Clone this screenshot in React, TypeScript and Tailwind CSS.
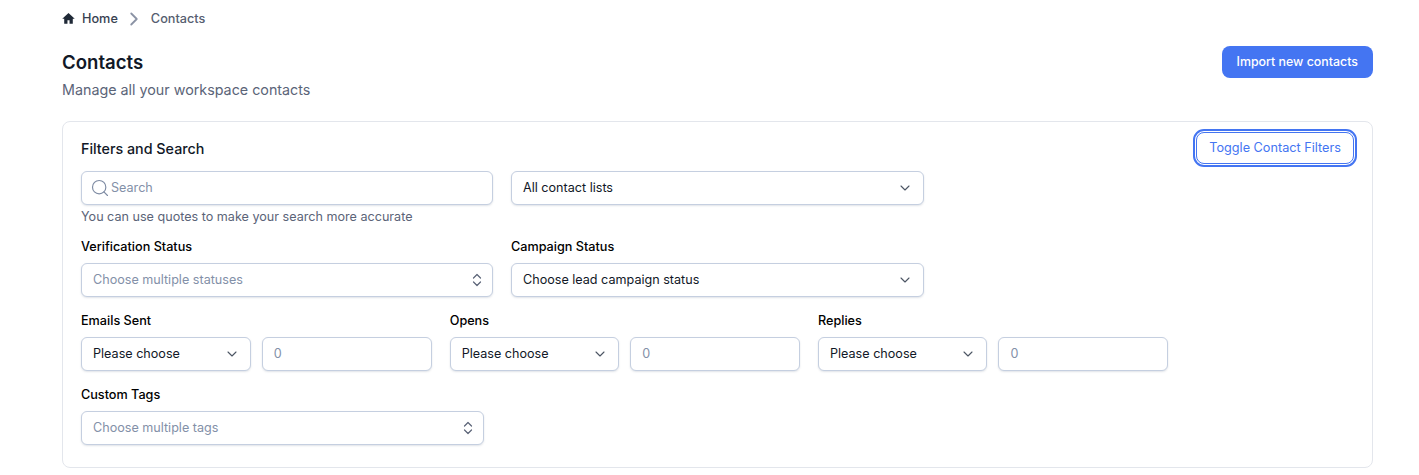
import React from 'react';
import { ChevronDown, ChevronRight, Search } from 'lucide-react';

const fieldClass =
  'flex h-[34px] items-center rounded-md border border-[#c5cfe0] bg-white px-[11px] text-[12.6px] shadow-[0_1px_2px_rgba(100,116,139,0.2)]';

const Label: React.FC<{ children: React.ReactNode }> = ({ children }) => (
  <div className="mb-[8px] h-[17px] text-[12.65px] leading-[17px] font-medium text-black">{children}</div>
);

const SelectBox: React.FC<{ value: string }> = ({ value }) => (
  <div className={`${fieldClass} justify-between text-[#111827]`}>
    <span>{value}</span>
    <ChevronDown className="mr-[-1px] h-4 w-4 text-[#4b5563]" strokeWidth={1.6} />
  </div>
);

const MultiBox: React.FC<{ placeholder: string }> = ({ placeholder }) => (
  <div className={`${fieldClass} justify-between text-[#8390a8]`}>
    <span>{placeholder}</span>
    <svg className="mr-[-4px] h-4 w-4 text-[#5b6478]" viewBox="0 0 16 16" fill="none" stroke="currentColor" strokeWidth="1.2" strokeLinecap="round" strokeLinejoin="round">
      <path d="M4.500 6 8 2.500 11.500 6" />
      <path d="M4.500 10 8 13.500 11.500 10" />
    </svg>
  </div>
);

const CountFilter: React.FC<{ label: string }> = ({ label }) => (
  <div>
    <Label>{label}</Label>
    <div className="grid grid-cols-2 gap-[11px]">
      <SelectBox value="Please choose" />
      <div className={`${fieldClass} text-[#8390a8]`}>0</div>
    </div>
  </div>
);

export default function App() {
  return (
    <div className="h-[475px] overflow-hidden bg-white pr-[46px] pl-[62px] font-['Inter',sans-serif]">
      <nav className="flex h-[37px] items-center text-[12.7px] font-medium">
        <svg className="mr-[7px] h-[13px] w-[13px] text-[#1f2937]" viewBox="0 0 20 20" fill="currentColor">
          <path d="M10 1.600 0.400 10.400h3v7.800h5v-5.400h3.200v5.400h5v-7.800h3z" />
        </svg>
        <span className="text-[#374151]">Home</span>
        <ChevronRight className="mx-[5.5px] h-[22px] w-[22px] text-[#8b93a5]" strokeWidth={2} />
        <span className="text-[#565e70]">Contacts</span>
      </nav>

      <header className="mt-[9px] flex h-[75px] items-start justify-between">
        <div>
          <h1 className="mt-[4px] text-[18.6px] leading-[24px] font-semibold text-[#111827]">Contacts</h1>
          <p className="mt-[6px] text-[14.3px] leading-[20px] text-[#5b6478]">Manage all your workspace contacts</p>
        </div>
        <button className="h-[32px] rounded-lg bg-[#4475f2] px-[15px] text-[12.4px] font-medium text-white">
          Import new contacts
        </button>
      </header>

      <section className="h-[347px] rounded-lg border border-[#e3e6ec] pt-[9px] pr-[18px] pl-[18px]">
        <div className="flex h-[34px] items-center justify-between">
          <h2 className="mt-[2px] text-[14.3px] font-medium text-[#111827]">Filters and Search</h2>
          <button className="h-[32px] rounded-lg border border-[#4475f2] bg-white px-[12px] text-[12.7px] font-normal text-[#4475f2] outline-2 outline-offset-1 outline-[#4475f2]">
            Toggle Contact Filters
          </button>
        </div>

        <div className="mt-[6px] grid grid-cols-[412px_413px] gap-x-[18px]">
          <div>
            <div className={`${fieldClass} gap-[1px] pl-[8px] text-[#8390a8]`}>
              <Search className="h-5 w-5 text-[#7e8ba3]" strokeWidth={1.4} />
              <span>Search</span>
            </div>
            <p className="mt-[3px] h-[17px] text-[12.6px] leading-[17px] text-[#5b6478]">
              You can use quotes to make your search more accurate
            </p>
          </div>
          <SelectBox value="All contact lists" />
        </div>

        <div className="mt-[13px] grid grid-cols-[412px_413px] gap-x-[18px]">
          <div>
            <Label>Verification Status</Label>
            <MultiBox placeholder="Choose multiple statuses" />
          </div>
          <div>
            <Label>Campaign Status</Label>
            <SelectBox value="Choose lead campaign status" />
          </div>
        </div>

        <div className="mt-[15px] grid grid-cols-[350.7px_350.3px_350px] gap-x-[18px]">
          <CountFilter label="Emails Sent" />
          <CountFilter label="Opens" />
          <CountFilter label="Replies" />
        </div>

        <div className="mt-[15px] w-[403px]">
          <Label>Custom Tags</Label>
          <MultiBox placeholder="Choose multiple tags" />
        </div>
      </section>
    </div>
  );
}
